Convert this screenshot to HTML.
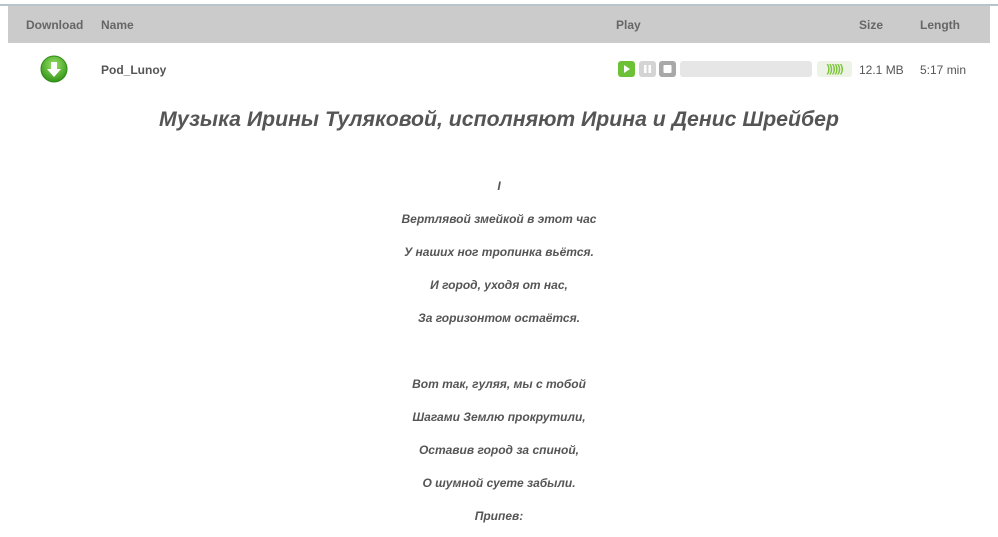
<!DOCTYPE html>
<html><head><meta charset="utf-8"><style>
body{margin:0;width:998px;height:537px;overflow:hidden;background:#fff;font-family:"Liberation Sans",Arial,sans-serif;position:relative}
.top{position:absolute;left:0;top:4px;width:998px;height:2px;background:#b8c4cc}
.hdr{position:absolute;left:8px;top:6px;width:982px;height:37px;background:#cbcbcb}
.h{position:absolute;top:18px;font-size:12px;font-weight:bold;color:#666}
.t{position:absolute;font-size:12px;color:#555}
.lyr{position:absolute;left:0;width:998px;text-align:center;font-size:12px;font-weight:bold;font-style:italic;color:#555}
.btn{position:absolute;top:61px;width:17px;height:16px;border-radius:3px}
</style></head><body>
<div class="top"></div>
<div class="hdr"></div>
<div class="h" style="left:26px">Download</div>
<div class="h" style="left:101px">Name</div>
<div class="h" style="left:616px">Play</div>
<div class="h" style="left:859px">Size</div>
<div class="h" style="left:920px">Length</div>
<svg style="position:absolute;left:39px;top:55px" width="30" height="30" viewBox="0 0 30 30">
<defs><radialGradient id="g" cx="50%" cy="35%" r="60%"><stop offset="0" stop-color="#9be36a"/><stop offset="1" stop-color="#3a9a1c"/></radialGradient></defs>
<circle cx="15" cy="14" r="13" fill="url(#g)" stroke="#2f8a16"/>
<path d="M12 7h6v7h4l-7 8-7-8h4z" fill="#fff"/>
</svg>
<div class="t" style="left:101px;top:63px;font-weight:bold">Pod_Lunoy</div>
<div class="btn" style="left:618px;background:#6cc136"><svg width="17" height="16"><path d="M6 4l6 4-6 4z" fill="#fff"/></svg></div>
<div class="btn" style="left:639px;background:#d4d4d4"><svg width="17" height="16"><rect x="5" y="4" width="2.5" height="8" fill="#fff"/><rect x="9.5" y="4" width="2.5" height="8" fill="#fff"/></svg></div>
<div class="btn" style="left:659px;background:#a8a8a8"><svg width="17" height="16"><rect x="4.5" y="4" width="8" height="8" rx="1" fill="#fff"/></svg></div>
<div style="position:absolute;left:680px;top:61px;width:132px;height:16px;background:#e6e6e6;border-radius:3px"></div>
<div style="position:absolute;left:817px;top:61px;width:35px;height:16px;background:#eef3e8;border-radius:3px;color:#7cc63a;font-size:11px;font-weight:bold;line-height:16px;text-align:center;letter-spacing:-1px">))))))</div>
<div class="t" style="left:859px;top:63px">12.1 MB</div>
<div class="t" style="left:920px;top:63px">5:17 min</div>
<div class="lyr" style="top:107px;font-size:21.25px">Музыка Ирины Туляковой, исполняют Ирина и Денис Шрейбер</div>
<div class="lyr" style="top:179px">I</div>
<div class="lyr" style="top:212px">Вертлявой змейкой в этот час</div>
<div class="lyr" style="top:245px">У наших ног тропинка вьётся.</div>
<div class="lyr" style="top:278px">И город, уходя от нас,</div>
<div class="lyr" style="top:311px">За горизонтом остаётся.</div>
<div class="lyr" style="top:377px">Вот так, гуляя, мы с тобой</div>
<div class="lyr" style="top:410px">Шагами Землю прокрутили,</div>
<div class="lyr" style="top:443px">Оставив город за спиной,</div>
<div class="lyr" style="top:476px">О шумной суете забыли.</div>
<div class="lyr" style="top:509px">Припев:</div>
</body></html>
